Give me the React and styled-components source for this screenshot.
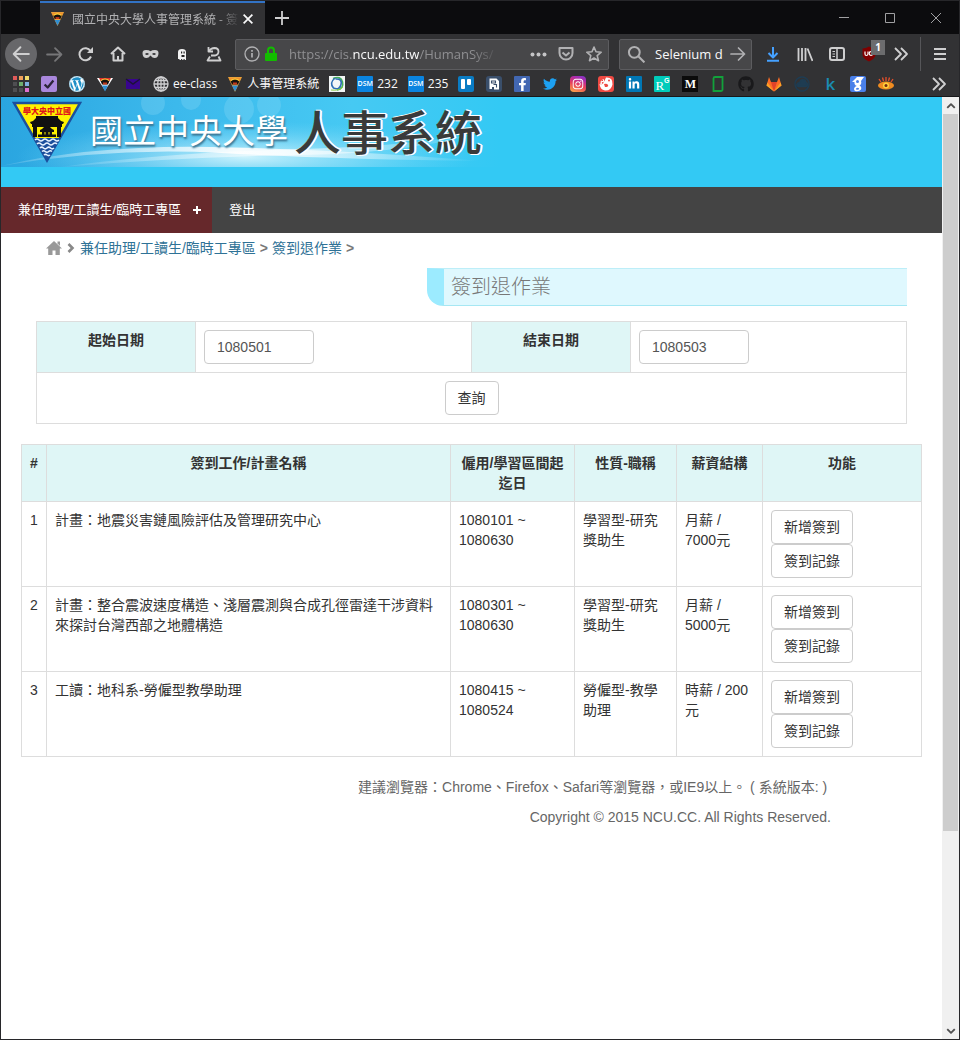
import React from "react";
import styled, { createGlobalStyle, css } from "styled-components";
import {
  FaWordpress,
  FaTwitter,
  FaInstagram,
  FaLinkedinIn,
  FaFacebookF,
  FaGithub,
} from "react-icons/fa";

const UI_FONT = '"Open Sans", "Noto Sans CJK TC", sans-serif';
const PAGE_FONT = '"Liberation Sans", "Noto Sans CJK TC", sans-serif';

const GlobalStyle = createGlobalStyle`
  * { box-sizing: border-box; }
  body { margin: 0; background: #fff; }
  button, input { font: inherit; color: inherit; margin: 0; }
  button { padding: 0; border: 0; background: none; }
  p, h1, h2 { margin: 0; font-weight: inherit; }
  table { border-collapse: collapse; border-spacing: 0; }
`;

/* ---------- browser frame ---------- */

const Window = styled.div`
  min-height: 100vh;
  display: flex;
  flex-direction: column;
  border: 1px solid #27272a;
  background: #fff;
`;

const Chrome = styled.header`
  background: #323234;
  color: #f9f9fa;
  font-family: ${UI_FONT};
  font-size: 12px;
  border-bottom: 1px solid #18181a;
`;

const TitleBar = styled.div`
  display: flex;
  height: 33px;
  padding-left: 39px;
  background: #0c0c0e;
`;

const Tab = styled.div`
  display: flex;
  align-items: center;
  width: 225px;
  padding: 0 9px 0 10px;
  background: #323234;
  border-top: 2px solid #3273c5;
`;

const TabTitle = styled.span`
  flex: 1;
  margin-left: 7px;
  white-space: nowrap;
  color: #b1b1b3;
  mask-image: linear-gradient(to right, #000 86%, transparent);
`;

const PlainButton = styled.button`
  display: flex;
  align-items: center;
  justify-content: center;
  flex: none;
  width: ${(p) => p.$w || 16}px;
`;

const WindowButtons = styled.div`
  display: flex;
  margin-left: auto;
  color: #a0a0a2;
`;

const Toolbar = styled.div`
  display: flex;
  align-items: center;
  height: 40px;
  padding: 0 3px 0 4px;
`;

const ToolButton = styled.button`
  position: relative;
  flex: none;
  display: flex;
  align-items: center;
  justify-content: center;
  width: 32px;
  height: 32px;
  color: ${(p) => p.$color || "#cfcfd0"};
  ${(p) =>
    p.$round &&
    css`
      border-radius: 50%;
      background: #67676a;
      margin-right: 1px;
    `}
`;

const Field = styled.div`
  display: flex;
  align-items: center;
  height: 31px;
  min-width: 0;
  background: #474749;
  border: 1px solid #5c5c5f;
  border-radius: 2px;
  font-size: 13px;
  color: #b1b1b3;
`;

const AddressField = styled(Field)`
  flex: 1;
  margin: 0 10px 0 5px;
  padding: 0 0 0 8px;
`;

const Identity = styled.span`
  display: flex;
  flex: none;
  gap: 4px;
`;

const SearchField = styled(Field)`
  width: 133px;
  margin-right: 5px;
  padding: 0 5px 0 7px;
`;

const Address = styled.div`
  flex: 1;
  min-width: 0;
  overflow: hidden;
  white-space: nowrap;
  margin: 0 6px 0 11px;
  color: #8f8f92;
  mask-image: linear-gradient(to right, #000 80%, transparent 92%);
`;

const Host = styled.span`
  color: #f9f9fa;
`;

const SearchInput = styled.input`
  flex: 1;
  min-width: 0;
  padding: 0;
  margin-left: 10px;
  border: 0;
  outline: 0;
  background: none;
  color: #f9f9fa;
`;

const Badge = styled.span`
  position: absolute;
  top: 2px;
  right: 0;
  width: 14px;
  height: 15px;
  line-height: 15px;
  text-align: center;
  font-size: 10px;
  font-weight: 700;
  color: #fff;
  background: #6c6c6e;
`;

const Divider = styled.span`
  width: 1px;
  height: 34px;
  margin: 0 3px;
  background: #565659;
`;

const Bookmarks = styled.nav`
  display: flex;
  align-items: center;
  gap: 12px;
  height: 22px;
  padding: 0 12px 2px;
`;

const Bookmark = styled.a`
  display: flex;
  align-items: center;
  flex: none;
  gap: 4px;
  height: 16px;
  margin-right: ${(p) => (p.$labelled ? -2 : 0)}px;
  line-height: 16px;
  color: #f9f9fa;
  text-decoration: none;
  white-space: nowrap;
`;

const Tile = styled.span`
  display: flex;
  align-items: center;
  justify-content: center;
  width: 16px;
  height: 16px;
  border-radius: ${(p) => p.$r ?? 2}px;
  background: ${(p) => p.$bg || "transparent"};
  color: ${(p) => p.$fg || "#fff"};
  font-family: ${(p) => p.$font || UI_FONT};
  font-size: ${(p) => p.$size || 12}px;
  font-weight: ${(p) => p.$weight || 400};
  line-height: 16px;
`;

const MoreBookmarks = styled.button`
  display: flex;
  margin-left: auto;
  color: #cfcfd0;
`;

/* ---------- page ---------- */

const Viewport = styled.div`
  flex: 1;
  display: flex;
`;

const Page = styled.div`
  flex: 1;
  min-width: 0;
  font: 14px/20px ${PAGE_FONT};
  color: #333;
`;

const Banner = styled.div`
  height: 90px;
  background: #33c9f4;
`;

const BannerArt = styled.div`
  position: relative;
  isolation: isolate;
  display: flex;
  align-items: center;
  width: 500px;
  height: 70px;
  padding-left: 11px;
  color: #fff;
`;

const Backdrop = styled.svg`
  position: absolute;
  inset: 0;
  z-index: -1;
  width: 100%;
  height: 100%;
`;

const School = styled.span`
  margin: 0 6px 0 8px;
  font-size: 33px;
  line-height: 70px;
  white-space: nowrap;
  text-shadow: 1px 2px 2px #39728f;
`;

const SystemName = styled.span`
  padding-top: 3px;
  font-size: 47px;
  font-weight: 500;
  line-height: 70px;
  white-space: nowrap;
  color: #3a3a3a;
  text-shadow: 1px -1px 0 #fff, 2px 0 0 #fff, 1px 1px 0 #fff;
`;

const MainNav = styled.nav`
  display: flex;
  background: #444;
  font-size: 13px;
`;

const NavLink = styled.a`
  display: flex;
  align-items: center;
  gap: 12px;
  height: 46px;
  padding: 0 11px 0 17px;
  color: #fff;
  text-decoration: none;
  background: ${(p) => (p.$active ? "#66282b" : "transparent")};
`;

const Breadcrumb = styled.nav`
  display: flex;
  align-items: center;
  gap: 4px;
  padding: 5px 45px 0;
  color: #777;
`;

const Crumb = styled.a`
  color: #2f7296;
  text-decoration: none;
`;

const Content = styled.main`
  padding: 10px 35px 0;
`;

const Heading = styled.h1`
  width: 55.1%;
  height: 38px;
  margin: 0 0 15px auto;
  padding-left: 7px;
  border: 1px solid #a6e7f3;
  border-top-color: #bdeef8;
  border-left: 17px solid #9cebff;
  border-right: 0;
  border-bottom-left-radius: 16px;
  background: #dff8fe;
  color: #777;
  font-size: 20px;
  font-weight: 300;
  line-height: 36px;
`;

const Table = styled.table`
  width: 100%;
  table-layout: fixed;

  th,
  td {
    padding: 8px;
    border: 1px solid #ddd;
    text-align: left;
    vertical-align: top;
  }

  th {
    background: #dff6f6;
    text-align: center;
    font-weight: 700;
  }
`;

const SubmitCell = styled.td`
  && {
    text-align: center;
  }
`;

const DateInput = styled.input`
  display: block;
  width: 110px;
  height: 34px;
  padding: 6px 12px;
  border: 1px solid #ccc;
  border-radius: 4px;
  background: #fff;
  color: #555;
`;

const Button = styled.button`
  display: inline-block;
  vertical-align: top;
  height: 34px;
  padding: 0 12px;
  border: 1px solid #ccc;
  border-radius: 4px;
  background: #fff;
  color: #333;
`;

const JobSection = styled.section`
  padding: 20px 20px 0;
`;

const Actions = styled.div`
  display: flex;
  flex-direction: column;
  align-items: flex-start;
`;

const Footer = styled.footer`
  display: flex;
  flex-direction: column;
  gap: 10px;
  padding: 20px 111px 20px 20px;
  text-align: right;
  color: #666;
`;

const Scrollbar = styled.div`
  display: flex;
  flex-direction: column;
  flex: none;
  width: 17px;
  background: #f0f0f0;
  color: #505050;
`;

const ScrollTrack = styled.div`
  flex: 1;
  display: flex;
  flex-direction: column;
`;

const ScrollThumb = styled.div`
  flex: 0 0 79%;
  margin: 0 1px;
  background: #cdcdcd;
`;

const ScrollButton = styled.button`
  display: flex;
  align-items: center;
  justify-content: center;
  height: 17px;
`;

/* ---------- drawings ---------- */

function Line({ size = 16, w = 2, children, cap = "butt" }) {
  return (
    <svg width={size} height={size} viewBox="0 0 16 16" fill="none" stroke="currentColor" strokeWidth={w} strokeLinecap={cap} strokeLinejoin="round" aria-hidden="true">
      {children}
    </svg>
  );
}

function Favicon({ size = 16, wide }) {
  return (
    <svg width={size} height={size} viewBox="0 0 16 16" aria-hidden="true">
      <path d={wide ? "M0 2h16L8 14.500z" : "M1 1h14L8 16z"} fill={wide ? "#fff" : "#e9a13a"} />
      <path d="M2 2h12l-1.500 3h-9z" fill={wide ? "#e2332a" : "#f0902c"} />
      <path d="M3.500 5q4.500-3.500 9 0L11 8.500H5z" fill="#17130f" />
      <path d="M4 4.500q4-3 8 0" fill="none" stroke="#ffd93b" strokeWidth="1.200" />
      <path d="M6 6.500h4v2H6z" fill="#c63a1c" />
      <path d="M5 9.500h6L8 15.500z" fill="#2f8ed2" />
    </svg>
  );
}

function Emblem() {
  return (
    <svg width="70" height="62" viewBox="0 0 70 62" aria-hidden="true">
      <path d="M2 2h66L35 59.500z" fill="#fff200" stroke="#1c4f9c" strokeWidth="2.500" />
      <path d="M22 37h26L35 59z" fill="#1c4f9c" />
      <g fill="none" stroke="#e8f2ff" strokeWidth="1.600">
        <path d="M23 39q2-2 4 0t4 0 4 0 4 0 4 0 4 0" />
        <path d="M25 43q2-2 4 0t4 0 4 0 4 0 4 0" />
        <path d="M28 47q1.800-1.800 3.500 0t3.500 0 3.500 0 3.500 0" />
        <path d="M30 50.500q1.700-1.500 3.300 0t3.300 0 3.300 0" />
        <path d="M32 54q1.500-1.200 3 0t3 0" />
      </g>
      <g fill="#111">
        <path d="M24 15h22v2q2 3 6 4l-1 2H19l-1-2q4-1 6-4z" />
        <path d="M20 23h30v3H20zM21 25h4v11h-4zM45 25h4v11h-4z" />
        <path d="M33 23h4v2l3 3 2 1v2H28v-2l2-1 3-3z" />
        <path d="M30 30h2.500v4H30zM37.500 30H40v4h-2.500zM33.500 30h3v4h-3zM26 33.500h18v2.500H26z" />
      </g>
      <text x="35" y="13" textAnchor="middle" fontFamily="Noto Sans CJK TC, sans-serif" fontWeight="900" fontSize="8" fill="#e0131c">學大央中立國</text>
    </svg>
  );
}

function BannerBackdrop() {
  return (
    <Backdrop viewBox="0 0 500 70" preserveAspectRatio="none" aria-hidden="true">
      <defs>
        <linearGradient id="sky" x1="0" y1="0" x2="1" y2="0">
          <stop offset="0" stopColor="#2aa5e0" />
          <stop offset=".35" stopColor="#3cb9ec" />
          <stop offset=".7" stopColor="#46c9f3" />
          <stop offset="1" stopColor="#33c9f4" />
        </linearGradient>
        <radialGradient id="glow">
          <stop offset="0" stopColor="#e6fbff" stopOpacity=".85" />
          <stop offset="1" stopColor="#7fdcf8" stopOpacity="0" />
        </radialGradient>
        <linearGradient id="beam" x1="0" y1="0" x2="1" y2="0">
          <stop offset="0" stopColor="#fff" stopOpacity=".1" />
          <stop offset=".5" stopColor="#fff" stopOpacity=".9" />
          <stop offset="1" stopColor="#fff" stopOpacity="0" />
        </linearGradient>
      </defs>
      <path d="M0 0h500v70H0z" fill="url(#sky)" />
      <g fill="#9be0f8" fillOpacity=".25">
        <circle cx="152" cy="6" r="12" />
        <circle cx="190" cy="3" r="10" />
        <circle cx="238" cy="12" r="15" />
        <circle cx="268" cy="8" r="12" />
      </g>
      <ellipse cx="245" cy="60" rx="230" ry="36" fill="url(#glow)" />
      <path d="M0 69Q90 48 210 50T480 64Q330 62 220 56T0 69z" fill="url(#beam)" />
      <path d="M60 70Q160 56 300 52T500 30Q420 56 300 58T60 70z" fill="url(#beam)" fillOpacity=".7" />
    </Backdrop>
  );
}

const Chevrons = () => (
  <Line size={16} w={1.8}>
    <path d="M2 2l6 6-6 6M8 2l6 6-6 6" />
  </Line>
);

const squares = [
  ["#e05a5a", 0, 0], ["#f0a05a", 6, 0], ["#f0dc6e", 12, 0],
  ["#4f4f52", 0, 6], ["#6fae6f", 6, 6], ["#7fb0e0", 12, 6],
  ["#4f4f52", 0, 12], ["#4f4f52", 6, 12], ["#e070d0", 12, 12],
];

const bookmarks = [
  { name: "Apps", icon: <svg width="16" height="16">{squares.map(([c, x, y]) => <rect key={`${x}-${y}`} x={x} y={y} width="4" height="4" fill={c} />)}</svg> },
  { name: "Tasks", icon: <Tile $bg="#a987dc" $fg="#2b2438"><Line size={14} w={2.6}><path d="M3 8.500l3.500 3.500L13 4" /></Line></Tile> },
  { name: "WordPress", icon: <Tile $bg="#fff" $r={8} $fg="#1f8fc6" $size={16}><FaWordpress /></Tile> },
  { name: "Portal", icon: <Favicon wide /> },
  { name: "Mail", icon: <svg width="16" height="16" viewBox="0 0 16 16"><path d="M1 3h14v10H1z" fill="#38048e" /><path d="M1 3l7 5 7-5" fill="none" stroke="#1d1238" strokeWidth="1.500" /></svg> },
  {
    name: "ee-class", label: "ee-class",
    icon: <Tile $fg="#d0d0d2"><Line w={1.3}><circle cx="8" cy="8" r="7" /><ellipse cx="8" cy="8" rx="3.300" ry="7" /><path d="M1 8h14M2 4.500h12M2 11.500h12M8 1v14" /></Line></Tile>,
  },
  { name: "人事管理系統", label: "人事管理系統", icon: <Favicon /> },
  {
    name: "Office",
    icon: <svg width="16" height="16" viewBox="0 0 16 16"><path d="M0 0h16v16H0z" fill="#f3f6f7" /><g fill="none" strokeWidth="1.600"><path d="M4 2.500q8-3 9.500 3.500T8 14" stroke="#45b058" /><path d="M6 2Q0 7 4.500 12q6 2.500 7.500-3.500T6.500 3" stroke="#2f6fb4" /><path d="M2 14q8 1 12-3" stroke="#8fcf4a" strokeWidth="1" /></g></svg>,
  },
  { name: "232", label: "232", icon: <Tile $bg="#0a84e0" $size={7} $weight={600} $r={1}>DSM</Tile> },
  { name: "235", label: "235", icon: <Tile $bg="#0a84e0" $size={7} $weight={600} $r={1}>DSM</Tile> },
  { name: "Trello", icon: <svg width="16" height="16" viewBox="0 0 16 16"><rect width="16" height="16" rx="2" fill="#0a7cc4" /><rect x="3" y="3" width="4" height="10" rx="1" fill="#fff" /><rect x="9" y="3" width="4" height="6" rx="1" fill="#fff" /></svg> },
  {
    name: "Docs",
    icon: <svg width="16" height="16" viewBox="0 0 16 16"><rect width="16" height="16" rx="3" fill="#3a4f6b" /><path d="M3.500 2.500h7l2.500 2.500v8.500H8V11H6v2H3.500z" fill="#fff" /><path d="M5.500 5h4v2h-4zM7.500 8.500h3v3" fill="none" stroke="#3a4f6b" strokeWidth="1.100" /></svg>,
  },
  { name: "Facebook", icon: <Tile $bg="#4267b2" $size={13} $r={1}><FaFacebookF /></Tile> },
  { name: "Twitter", icon: <Tile $fg="#1da1f2" $size={14}><FaTwitter /></Tile> },
  { name: "Instagram", icon: <Tile $bg="linear-gradient(20deg,#fdb048,#e8405a 45%,#b02ba8 75%,#7a38d0)" $size={12} $r={4}><FaInstagram /></Tile> },
  {
    name: "Duck",
    icon: <svg width="16" height="16" viewBox="0 0 16 16"><rect width="16" height="16" rx="3" fill="#ef4a43" /><path d="M8 1.500Q15 1 14.500 8.500 13 15 7 14.500 2 13.500 1.500 8q3 1 4-1T8 1.500z" fill="#fff" /><path d="M2 7l2 .5L3 5l3 1-1-3" fill="none" stroke="#fff" /><path d="M6 8q3-1 4 1t-3 2z" fill="#ef4a43" /><circle cx="11" cy="4.500" r="1" fill="#ef4a43" /></svg>,
  },
  { name: "LinkedIn", icon: <Tile $bg="#0077b5" $size={12} $r={1}><FaLinkedinIn /></Tile> },
  {
    name: "ResearchGate",
    icon: <svg width="16" height="16" viewBox="0 0 16 16"><rect width="16" height="16" rx="1" fill="#00ccbb" /><text x="1.500" y="13.500" fontFamily="Liberation Serif, serif" fontSize="13" fill="#fff">R</text><text x="10" y="7" fontFamily="Liberation Sans, sans-serif" fontWeight="700" fontSize="7" fill="#fff">G</text></svg>,
  },
  { name: "Medium", icon: <Tile $bg="#0b0b0b" $r={0} $font='"Liberation Serif", serif' $weight={700}>M</Tile> },
  { name: "Glassdoor", icon: <svg width="16" height="16" viewBox="0 0 16 16"><path d="M3.500 11V2.500A1.500 1.500 0 0 1 5 1h7.500v10.500M3.500 11v4H11a1.500 1.500 0 0 0 1.500-1.500V9" fill="none" stroke="#12a13b" strokeWidth="1.800" /></svg> },
  { name: "GitHub", icon: <Tile $fg="#19191b" $size={16}><FaGithub /></Tile> },
  {
    name: "GitLab",
    icon: <svg width="16" height="16" viewBox="0 0 16 16"><path d="M8 15.500L.5 9.500 3 1l2 5h6l2-5 2.500 8.500z" fill="#fc6d26" /><path d="M8 15.500L5 6h6z" fill="#e24329" /><path d="M8 15.500L.5 9.500 1.500 6.500zM8 15.500l7.500-6-1-3z" fill="#fca326" /></svg>,
  },
  { name: "Cloud", icon: <Tile $fg="#1e3c52"><Line w={1.4}><circle cx="8" cy="8" r="7" /><path d="M4 10.500h7a2 2 0 0 0 1-4A3 3 0 0 0 6 7a2 2 0 0 0-2 3.500z" fill="currentColor" /></Line></Tile> },
  { name: "Kaggle", icon: <Tile $fg="#1a8cb0" $size={17} $weight={600}>k</Tile> },
  {
    name: "Scholar",
    icon: <svg width="16" height="16" viewBox="0 0 16 16"><rect width="16" height="16" rx="2" fill="#4a80ea" /><path d="M2 6l5-5h7l-3 4q1 3-1.500 4.500Q12 11 11 13.500 9 16 5 15q-2-2 0-4 1-1 2-1-3-1-2.500-4z" fill="#fff" /><circle cx="7.500" cy="5.500" r="1.500" fill="#4a80ea" /><path d="M6 12.500q2-1.500 3 0t-3 1z" fill="#4a80ea" /></svg>,
  },
  {
    name: "Eye",
    icon: <svg width="16" height="16" viewBox="0 0 16 16"><g stroke="#e8502a" strokeWidth="1.300"><path d="M1 3l2 3M4.500 1.500L5.500 5M8 1v4M11.500 1.500L10.500 5M15 3l-2 3" /></g><ellipse cx="8" cy="9.500" rx="8" ry="4" fill="#f08c20" /><circle cx="8" cy="9.500" r="3" fill="#ffd23c" /><circle cx="8" cy="9.500" r="1.500" fill="#7a2a10" /></svg>,
  },
];

const jobs = [
  { title: "計畫：地震災害鏈風險評估及管理研究中心", period: "1080101 ~ 1080630", kind: "學習型-研究獎助生", pay: "月薪 / 7000元" },
  { title: "計畫：整合震波速度構造、淺層震測與合成孔徑雷達干涉資料來探討台灣西部之地體構造", period: "1080301 ~ 1080630", kind: "學習型-研究獎助生", pay: "月薪 / 5000元" },
  { title: "工讀：地科系-勞僱型教學助理", period: "1080415 ~ 1080524", kind: "勞僱型-教學助理", pay: "時薪 / 200元" },
];

function BrowserChrome() {
  return (
    <Chrome>
      <TitleBar>
        <Tab>
          <Favicon size={15} />
          <TabTitle>國立中央大學人事管理系統 - 簽</TabTitle>
          <PlainButton aria-label="Close tab">
            <Line size={14}><path d="M3 3l10 10M13 3L3 13" stroke="#f9f9fa" /></Line>
          </PlainButton>
        </Tab>
        <PlainButton $w={34} aria-label="New tab">
          <Line><path d="M8 1v14M1 8h14" stroke="#cfcfd0" strokeWidth="1.800" /></Line>
        </PlainButton>
        <WindowButtons>
          <PlainButton $w={46} aria-label="Minimize"><Line w={1}><path d="M3 7.500h10" /></Line></PlainButton>
          <PlainButton $w={46} aria-label="Maximize"><Line w={1}><path d="M3.500 3.500h9v9h-9z" /></Line></PlainButton>
          <PlainButton $w={46} aria-label="Close"><Line w={1}><path d="M3 3l10 10M13 3L3 13" /></Line></PlainButton>
        </WindowButtons>
      </TitleBar>
      <Toolbar>
        <ToolButton $round aria-label="Back"><Line size={18} w={1.7} cap="round"><path d="M15 8H1.500M7.500 2l-6 6 6 6" /></Line></ToolButton>
        <ToolButton $color="#767678" aria-label="Forward"><Line size={17} w={1.7} cap="round"><path d="M1 8h13.500M8.500 2l6 6-6 6" /></Line></ToolButton>
        <ToolButton aria-label="Reload"><Line><path d="M13 10.500A6 6 0 1 1 12.500 5" /><path d="M15 1v6H9z" fill="currentColor" stroke="none" /></Line></ToolButton>
        <ToolButton aria-label="Home"><Line><path d="M1 8l7-6.500L15 8M3.500 7v7.500h9V7M8 10v4.500" /></Line></ToolButton>
        <ToolButton aria-label="Mask">
          <svg width="17" height="16" viewBox="0 0 17 16" aria-hidden="true"><path fillRule="evenodd" fill="currentColor" d="M.5 7Q.5 4 4 4q3 0 4.500 1.200Q10 4 13 4q3.500 0 3.500 3 0 5-4 5-2 0-4-2.500Q6.500 12 4.500 12q-4 0-4-5zM3 8q1.800 1.800 4 0Q5 5.800 3 8zm7 0q2.200 1.800 4 0-2-2.200-4 0z" /></svg>
        </ToolButton>
        <ToolButton $color="#f2f2f2" aria-label="Ghost">
          <svg width="10" height="13" viewBox="0 0 10 13" aria-hidden="true"><path fill="currentColor" d="M1 12V4q0-3 4-3t4 3v8H7.700v-1H6.500v1H5.200v-1H4v1H2.500v-1H1z" /><path d="M4 3.500h1.200v2H4zM6.500 3.500h1.200v2H6.500zM4.500 7h3v2h-3z" fill="#222" /></svg>
        </ToolButton>
        <ToolButton aria-label="Undo close tab"><Line w={1.8}><path d="M2.500 1v4.500H7" /><path d="M2.500 5.500Q5 2 8.500 2q4 .2 4 3.500T9 9.500H5M4 10.500l-2.500 4h13l-2-4" /></Line></ToolButton>
        <AddressField>
          <Identity>
            <Line w={1.3}><circle cx="8" cy="8" r="7" /><path d="M8 7v4.500M8 4v1.700" strokeWidth="1.700" /></Line>
            <svg width="14" height="16" viewBox="0 0 14 16" aria-label="Secure connection"><path d="M4 8V4.500a3 3 0 0 1 6 0V8" fill="none" stroke="#12bc00" strokeWidth="2" /><rect x="1" y="7" width="12" height="8" rx="1" fill="#12bc00" /></svg>
          </Identity>
          <Address role="textbox" aria-label="Address">https://cis.<Host>ncu.edu.tw</Host>/HumanSys/</Address>
          <PlainButton $w={28} aria-label="Page actions"><svg width="17" height="5" aria-hidden="true" fill="#c4c4c6"><circle cx="2.500" cy="2.500" r="2" /><circle cx="8.500" cy="2.500" r="2" /><circle cx="14.500" cy="2.500" r="2" /></svg></PlainButton>
          <PlainButton $w={28} aria-label="Save to Pocket"><Line><path d="M1.500 2h13v5a6.500 6.500 0 0 1-13 0z" /><path d="M4.500 6.500L8 9.500l3.500-3" /></Line></PlainButton>
          <PlainButton $w={28} aria-label="Bookmark this page"><Line w={1.6}><path d="M8 1l2 4.800 5.200.4-4 3.400 1.300 5.100L8 12l-4.500 2.700 1.300-5.100-4-3.400L6 5.800z" /></Line></PlainButton>
        </AddressField>
        <SearchField>
          <Line size={18} w={1.8}><circle cx="6.500" cy="6.500" r="4.800" /><path d="M10 10l5.500 5.500" /></Line>
          <SearchInput aria-label="Search" defaultValue="Selenium d" />
          <PlainButton aria-label="Go"><Line w={1.7} cap="round"><path d="M1 8h13.500M8.500 2l6 6-6 6" /></Line></PlainButton>
        </SearchField>
        <ToolButton $color="#45a1ff" aria-label="Downloads"><Line><path d="M8 1v10M3.500 7L8 11.500 12.500 7M2 14.800h12" /></Line></ToolButton>
        <ToolButton aria-label="Library"><Line><path d="M1.500 2v13M5 2v13M8.500 2v13M10.500 2.500l5 12.500" strokeWidth="1.800" /></Line></ToolButton>
        <ToolButton aria-label="Sidebar"><Line><rect x="1" y="2" width="14" height="12" rx="2" /><path d="M8 2v12" strokeWidth="1.500" /><path d="M3.500 5.500h2.500M3.500 8h2.500M3.500 10.500h2.500" strokeWidth="1" /></Line></ToolButton>
        <ToolButton aria-label="uBlock Origin">
          <svg width="16" height="16" viewBox="0 0 16 16" aria-hidden="true"><path d="M8 .5q3 2 6.500 2v6q0 4-6.500 7-6.500-3-6.500-7v-6q3.500 0 6.500-2z" fill="#800000" /><path d="M4 5.500V8q0 1.500 1.400 1.500T7 8V5.500" fill="none" stroke="#fff" strokeWidth="1.200" /><circle cx="10" cy="7.500" r="1.800" fill="none" stroke="#fff" strokeWidth="1.200" /></svg>
          <Badge>1</Badge>
        </ToolButton>
        <ToolButton aria-label="More tools"><Chevrons /></ToolButton>
        <Divider />
        <ToolButton aria-label="Menu"><Line><path d="M2 3h12M2 8h12M2 13h12" /></Line></ToolButton>
      </Toolbar>
      <Bookmarks aria-label="Bookmarks">
        {bookmarks.map((b) => (
          <Bookmark key={b.name} href="#" aria-label={b.name} $labelled={Boolean(b.label)}>
            {b.icon}
            {b.label}
          </Bookmark>
        ))}
        <MoreBookmarks aria-label="More bookmarks"><Chevrons /></MoreBookmarks>
      </Bookmarks>
    </Chrome>
  );
}

function SearchForm() {
  return (
    <Table>
      <colgroup>
        <col width="159" />
        <col />
        <col width="159" />
        <col />
      </colgroup>
      <tbody>
        <tr>
          <th><label htmlFor="start">起始日期</label></th>
          <td><DateInput id="start" defaultValue="1080501" /></td>
          <th><label htmlFor="end">結束日期</label></th>
          <td><DateInput id="end" defaultValue="1080503" /></td>
        </tr>
        <tr>
          <SubmitCell colSpan={4}><Button>查詢</Button></SubmitCell>
        </tr>
      </tbody>
    </Table>
  );
}

function JobTable() {
  return (
    <Table>
      <colgroup>
        <col width="25" />
        <col />
        <col width="124" />
        <col width="102" />
        <col width="86" />
        <col width="159" />
      </colgroup>
      <thead>
        <tr>
          <th>#</th>
          <th>簽到工作/計畫名稱</th>
          <th>僱用/學習區間起迄日</th>
          <th>性質-職稱</th>
          <th>薪資結構</th>
          <th>功能</th>
        </tr>
      </thead>
      <tbody>
        {jobs.map((job, i) => (
          <tr key={job.title}>
            <td>{i + 1}</td>
            <td>{job.title}</td>
            <td>{job.period}</td>
            <td>{job.kind}</td>
            <td>{job.pay}</td>
            <td>
              <Actions>
                <Button>新增簽到</Button>
                <Button>簽到記錄</Button>
              </Actions>
            </td>
          </tr>
        ))}
      </tbody>
    </Table>
  );
}

export default function App() {
  return (
    <Window>
      <GlobalStyle />
      <BrowserChrome />
      <Viewport>
        <Page>
          <Banner>
            <BannerArt>
              <BannerBackdrop />
              <Emblem />
              <School>國立中央大學</School>
              <SystemName>人事系統</SystemName>
            </BannerArt>
          </Banner>
          <MainNav aria-label="Main">
            <NavLink href="#" $active>
              兼任助理/工讀生/臨時工專區
              <svg width="8" height="8" aria-hidden="true"><path d="M4 0v8M0 4h8" stroke="#fff" strokeWidth="2" /></svg>
            </NavLink>
            <NavLink href="#">登出</NavLink>
          </MainNav>
          <Breadcrumb aria-label="Breadcrumb">
            <svg width="16" height="16" viewBox="0 0 16 16" fill="#999" aria-hidden="true"><path d="M8 1l8 7.500h-2.200V15H9.500v-4.500h-3V15H2.200V8.500H0z" /><path d="M11.500 1.500H14V6l-2.500-2.500z" /></svg>
            <svg width="10" height="10" viewBox="0 0 10 10" aria-hidden="true"><path d="M2.500 1l4 4-4 4" fill="none" stroke="#888" strokeWidth="2.600" /></svg>
            <Crumb href="#">兼任助理/工讀生/臨時工專區</Crumb>
            <b>&gt;</b>
            <Crumb href="#">簽到退作業</Crumb>
            <b>&gt;</b>
          </Breadcrumb>
          <Content>
            <Heading>簽到退作業</Heading>
            <SearchForm />
          </Content>
          <JobSection>
            <JobTable />
          </JobSection>
          <Footer>
            <p>建議瀏覽器：Chrome、Firefox、Safari等瀏覽器，或IE9以上。 ( 系統版本: )&nbsp;</p>
            <p>Copyright © 2015 NCU.CC. All Rights Reserved.</p>
          </Footer>
        </Page>
        <Scrollbar aria-hidden="true">
          <ScrollButton tabIndex={-1}><Line size={10}><path d="M2 11l6-6 6 6" strokeWidth="3" /></Line></ScrollButton>
          <ScrollTrack><ScrollThumb /></ScrollTrack>
          <ScrollButton tabIndex={-1}><Line size={10}><path d="M2 5l6 6 6-6" strokeWidth="3" /></Line></ScrollButton>
        </Scrollbar>
      </Viewport>
    </Window>
  );
}
